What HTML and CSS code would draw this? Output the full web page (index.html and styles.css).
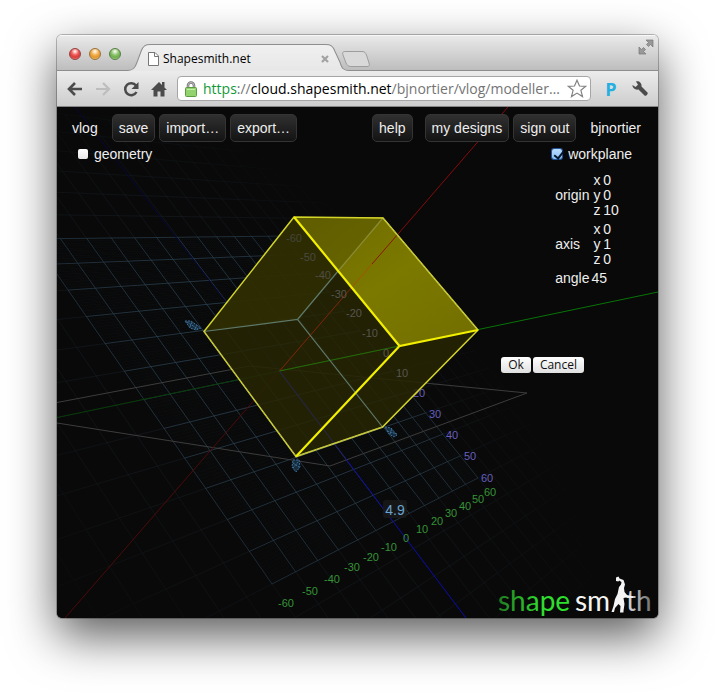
FILE: index.html
```html
<!DOCTYPE html>
<html lang="en">
<head>
<meta charset="utf-8">
<title>Shapesmith.net</title>
<link rel="stylesheet" href="styles.css">
</head>
<body>
<div class="window">
  <header class="tabstrip">
    <div class="lights"><span class="light red"></span><span class="light amber"></span><span class="light green"></span></div>
    <div class="tab">
      <svg class="tab-shape" viewBox="0 0 219 27" preserveAspectRatio="none" aria-hidden="true">
        <defs><linearGradient id="tabfill" x1="0" y1="0" x2="0" y2="1"><stop offset="0" stop-color="#f0f0f0"/><stop offset="1" stop-color="#e7e7e7"/></linearGradient></defs>
        <path d="M0 26.500 C6 26.500 8 24 10 18 L14 7 C16 2 18 .5 23 .5 H196 C201 .5 203 2 205 7 L210 18 C212 24 213 26.500 219 26.500 V27 H0Z" fill="url(#tabfill)"/>
        <path d="M0 26.500 C6 26.500 8 24 10 18 L14 7 C16 2 18 .5 23 .5 H196 C201 .5 203 2 205 7 L210 18 C212 24 213 26.500 219 26.500" fill="none" stroke="#8e8e8e"/>
      </svg>
      <div class="tab-content">
        <svg width="11" height="14" viewBox="0 0 11 14" aria-hidden="true"><path d="M.5.5H7L10.500 4V13.500H.5Z" fill="#fff" stroke="#777"/><path d="M6.500.5V4.500H10.500" fill="none" stroke="#777"/></svg>
        <span class="tab-title">Shapesmith.net</span>
        <svg width="8" height="8" viewBox="0 0 8 8" aria-hidden="true"><path d="M1 1 7 7M7 1 1 7" stroke="#a2a2a2" stroke-width="2.200"/></svg>
      </div>
    </div>
    <svg class="new-tab" width="28" height="16" viewBox="0 0 28 16" aria-hidden="true"><path d="M4 .5H20C23 .5 23.500 2 24.500 4L27 12C28 15 27 15.500 25 15.500H9C6 15.500 5 14 4 12L1 4C0 1 1 .5 4 .5Z" fill="#d9d9d9" stroke="#9d9d9d"/></svg>
    <svg class="expand" width="16" height="16" viewBox="0 0 16 16" aria-hidden="true"><path d="M8 1H15V8L12.500 5.500 10.500 7.500 8.500 5.500 10.500 3.500ZM1 8 3.500 10.500 5.500 8.500 7.500 10.500 5.500 12.500 8 15H1Z" fill="#999" stroke="#777" stroke-width=".7"/></svg>
  </header>
  <nav class="toolbar">
    <svg class="nav-icon" width="16" height="16" viewBox="0 0 16 16" aria-hidden="true"><path d="M15 8H3M8 2 2 8 8 14" fill="none" stroke="#4b4b4b" stroke-width="2.600"/></svg>
    <svg class="nav-icon" width="16" height="16" viewBox="0 0 16 16" aria-hidden="true"><path d="M1 8H13M8 2 14 8 8 14" fill="none" stroke="#bdbdbd" stroke-width="2.200"/></svg>
    <svg class="nav-icon" width="16" height="16" viewBox="0 0 16 16" aria-hidden="true"><path d="M13 4.500A6 6 0 1 0 13.500 11" fill="none" stroke="#4b4b4b" stroke-width="2.500"/><path d="M15.500 1V8H8.500Z" fill="#4b4b4b"/></svg>
    <svg class="nav-icon" width="16" height="16" viewBox="0 0 16 16" aria-hidden="true"><path d="M8 1 11 4V1H13.500V6.500L16 9H13.500V15.500H9.500V10.500H6.500V15.500H2.500V9H0Z" fill="#4b4b4b"/></svg>
    <div class="address">
      <svg width="12" height="16" viewBox="0 0 12 16" aria-hidden="true"><path d="M3 8V4.500A3 3 0 0 1 9 4.500V8" fill="none" stroke="#777" stroke-width="2.600"/><path d="M3 8V4.500A3 3 0 0 1 9 4.500V8" fill="none" stroke="#ccc" stroke-width=".8"/><rect x=".5" y="6.500" width="11" height="9" rx="1" fill="#92d36e" stroke="#5d9b42"/><path d="M2 8.500H10" stroke="#c5efad"/></svg>
      <span class="url"><span class="scheme">https</span><span class="dim">://</span><span class="host">cloud.shapesmith.net</span><span class="dim">/bjnortier/vlog/modeller…</span></span>
      <svg width="20" height="19" viewBox="0 0 20 19" aria-hidden="true"><path d="M10 1.200 12.500 7 18.800 7.300 13.900 11.300 15.500 17.600 10 14.100 4.500 17.600 6.100 11.300 1.200 7.300 7.500 7Z" fill="#fff" stroke="#828282" stroke-width="1.200"/></svg>
    </div>
    <span class="extension">P</span>
    <svg class="wrench" width="18" height="18" viewBox="0 0 18 18" aria-hidden="true"><path d="M5 1.500C8 .8 11 3 10.500 6.500L16.500 12.500C17.500 14 15 16.500 13.500 15.500L7.500 9.500C4.500 10.300 1.200 8 1.500 5L4.500 7 7 4.800Z" fill="#4b4b4b"/></svg>
  </nav>
  <main class="viewport">
    <svg class="scene" viewBox="57 107 601 511" preserveAspectRatio="xMidYMid slice" role="img" aria-label="3D workplane">
      <defs>
        <linearGradient id="topface" x1="0" y1="0" x2="1" y2="1"><stop offset="0" stop-color="#6c6900"/><stop offset=".5" stop-color="#7c7900"/><stop offset="1" stop-color="#716e00"/></linearGradient>
        <linearGradient id="shapefill"><stop offset="0" stop-color="#207c20"/><stop offset=".6" stop-color="#30dc30"/><stop offset="1" stop-color="#2be02b"/></linearGradient>
        <linearGradient id="thfill"><stop offset="0" stop-color="#e0e0e0"/><stop offset="1" stop-color="#6e6e6e"/></linearGradient>
      </defs>
      <rect x="57" y="107" width="601" height="511" fill="#090909"/>
      <g id="grid" fill="none" stroke="#37556b"></g>
      <path d="M57 423 330 466 527 393 250 366 57 402.500" fill="none" stroke="#3d3d3d"/>
      <path d="M75 107 279.500 371" stroke="#08083c"/><path d="M279.500 371 466 618" stroke="#0b0ba6"/>
      <path d="M65 618 279.500 371" stroke="#4d0b0b"/><path d="M279.500 371 508 107" stroke="#870b0b"/>
      <path d="M57 417.500 279.500 371" stroke="#073c07"/><path d="M279.500 371 658 292" stroke="#087408"/>

      <g fill="#675fbd" class="ticks">
        <text x="419" y="397">20</text><text x="435" y="418">30</text><text x="452" y="439">40</text><text x="470" y="460">50</text><text x="487" y="482">60</text>
      </g>
      <path d="M294 217 204 331.500 296 456.500 382.500 427 478 330 399.500 346Z" fill="#272504" fill-opacity=".86"/>
      <path d="M294 217 204 331.500 297.500 319.500 339 270Z" fill="#3a3800" fill-opacity=".45"/>
      <path d="M294 217H383L478 330 399.500 346Z" fill="url(#topface)"/>
      <path d="M294 217H383L339 270Z" fill="#4d4b00" fill-opacity=".4"/>
      <path d="M279.500 371 352 287" stroke="#7c2508"/><path d="M352 287 372 264" stroke="#a55208"/><path d="M372 264 398 234" stroke="#8c1800"/>
      <path d="M279.500 371 399 346" stroke="#236b08"/>
      <path d="M279.500 371 346 459" stroke="#25254c"/>
      <g fill="#58554f" class="ticks">
        <text x="294" y="242" fill="#47453a">-60</text><text x="308" y="261" fill="#4b4940">-50</text><text x="323" y="279" fill="#504d44">-40</text><text x="339" y="298">-30</text><text x="354" y="317">-20</text><text x="370" y="337">-10</text><text x="386" y="357">0</text><text x="402" y="377">10</text>
      </g>
      <g fill="none" stroke="#5f7969" stroke-width="1.200">
        <path d="M204 331.500 297.500 319.500 382.500 427M297.500 319.500 339 270"/><path d="M339 270 383 218" stroke="#898c35"/>
      </g>
      <g fill="none" stroke="#d4d529" stroke-width="1.500">
        <path d="M294 217 204 331.500 296 456.500 382.500 427 478 330 383 218Z"/>
        <path d="M204 331.500 296 456.500 382.500 427M478 330 383 218" stroke="#a8ad75" stroke-dasharray="2 2" stroke-width="1"/>
      </g>
      <path d="M294 217 399.500 346 478 330M399.500 346 296 456.500" fill="none" stroke="#f2f000" stroke-width="2.200"/>
      <g fill="#172c3d" stroke="#3c6f99" stroke-dasharray="2 1">
        <path d="M185 321 191 321 201 328 196 330 190 328Z"/><path d="M187 322 198 329M190 327 192 322M195 329 197 325"/>
        <path d="M385 427 391 428 397 435 394 437 389 434Z"/><path d="M387 431 397 434M390 434 392 428"/>
        <path d="M293 460 299 460 300 467 296 472 292 467Z"/><path d="M293 463 299 467M293 468 298 462"/>
      </g>
      <g fill="#369336" class="ticks">
        <text x="286" y="607">-60</text><text x="310" y="595">-50</text><text x="332" y="583">-40</text><text x="352" y="571">-30</text><text x="371" y="561">-20</text><text x="389" y="551">-10</text><text x="406" y="542">0</text><text x="422" y="533">10</text><text x="437" y="525">20</text><text x="451" y="517">30</text><text x="465" y="510">40</text><text x="478" y="503">50</text><text x="490" y="496">60</text>
      </g>
      <rect x="383" y="500" width="24" height="18" rx="3" fill="#191919" fill-opacity=".85"/>
      <text x="395" y="514.500" class="readout">4.9</text>
      <g class="logo">
        <text x="498" y="611" fill="url(#shapefill)">shape</text><text x="575" y="611" fill="#f4f4f4">sm</text><text x="626" y="611" fill="url(#thfill)">th</text>
        <path d="M616 577.500 618.500 576.500 619.500 578.500 623.500 580 625 584.500 624 588 624.500 592 627 595 633 596.500 633 598 626 597.500 623.500 598 624.500 604 623.500 611 623.500 612.500 620 612.500 620.500 606 618.500 604 615 608 614 612 611.500 612 613.500 606 615 599 617.500 594 619 587 621 584.500 621.500 582 619 580.500 618.500 581.500 616 581Z" fill="#f4f4f4"/>
      </g>
    </svg>
    <div class="overlay">
      <div class="actions">
        <span class="design">vlog</span>
        <button>save</button><button>import…</button><button>export…</button>
        <button class="help">help</button>
        <button class="designs">my designs</button><button>sign out</button>
        <span class="user">bjnortier</span>
      </div>
      <div class="panels">
        <label class="toggle"><input type="checkbox">geometry</label>
        <section class="workplane">
          <label class="toggle"><input type="checkbox" checked>workplane</label>
          <table class="props">
            <tr><th scope="row">origin</th><td><div>x&thinsp;0</div><div>y&thinsp;0</div><div>z&thinsp;10</div></td></tr>
            <tr><th scope="row">axis</th><td><div>x&thinsp;0</div><div>y&thinsp;1</div><div>z&thinsp;0</div></td></tr>
            <tr><th scope="row">angle</th><td>45</td></tr>
          </table>
        </section>
      </div>
      <div class="confirm"><button>Ok</button><button>Cancel</button></div>
    </div>
  </main>
</div>
<script src="grid.js"></script>
</body>
</html>
```
FILE: styles.css
```css
* { box-sizing: border-box; }
body {
  margin: 0;
  padding: 35px 57px 79px;
  background: #fff;
  font-family: "Liberation Sans", Arial, sans-serif;
  font-size: 14px;
}
.window {
  border-radius: 5px;
  overflow: hidden;
  box-shadow: 0 0 0 1px rgba(0, 0, 0, .25), 0 18px 48px rgba(0, 0, 0, .65);
}
.tabstrip {
  display: flex;
  align-items: flex-end;
  height: 36px;
  padding: 0 4px 0 12px;
  background: linear-gradient(#e9e9e9, #bcbcbc);
  border-top: 1px solid #f8f8f8;
  box-shadow: inset 0 -1px #8e8e8e;
}
.lights { display: flex; gap: 8px; align-self: center; }
.light {
  width: 12px;
  height: 12px;
  border-radius: 50%;
  border: 1px solid #7c4a46;
}
.red { background: radial-gradient(circle at 50% 25%, #fff, #ee5a57 40%, #d93c3a 65%, #ff9b96); border-color: #96403d; }
.amber { background: radial-gradient(circle at 50% 25%, #fff, #f3b04d 40%, #e0962f 65%, #ffe28a); border-color: #99703a; }
.green { background: radial-gradient(circle at 50% 25%, #fff, #8dc56c 40%, #6dab4d 65%, #c8f3a0); border-color: #567d47; }
.tab { display: grid; width: 222px; height: 27px; margin-left: 6px; }
.tab-shape, .tab-content { grid-area: 1 / 1; }
.tab-shape { width: 100%; height: 27px; }
.tab-content {
  z-index: 1;
  display: flex;
  align-items: center;
  gap: 4px;
  padding: 2px 20px 0 21px;
}
.tab-title { flex: 1; font-family: "Open Sans", sans-serif; font-size: 12px; color: #000; }
.new-tab { margin: 0 0 4px -7px; }
.expand { align-self: flex-start; margin: 3px 0 0 auto; }
.toolbar {
  display: flex;
  align-items: center;
  gap: 12px;
  height: 36px;
  padding: 0 9px 0 10px;
  background: linear-gradient(#ececec, #cdcdcd);
  border-bottom: 1px solid #858585;
}
.nav-icon { flex: none; }
.address {
  flex: 1;
  min-width: 0;
  display: flex;
  align-items: center;
  gap: 3px;
  height: 25px;
  margin-left: -2px;
  padding: 0 3px 0 7px;
  background: #fff;
  border: 1px solid #a6a6a6;
  border-radius: 4px;
}
.address svg { flex: none; }
.url { flex: 1; padding-left: 3px; white-space: nowrap; font-family: "Open Sans", sans-serif; font-size: 14px; color: #000; }
.scheme { color: #109a38; }
.dim { color: #747474; }
.extension { width: 16px; text-align: center; color: #25afe0; font: bold 18px "Open Sans", sans-serif; }
.viewport { display: grid; color: #eee; background: #090909; }
.scene, .overlay { grid-area: 1 / 1; }
.scene { display: block; width: 100%; }
.ticks { font-size: 11px; text-anchor: middle; }
.readout { font-size: 14px; text-anchor: middle; fill: #67a3d3; }
.logo { font-family: Lato, sans-serif; font-size: 28px; }
.overlay { z-index: 1; }
.actions { display: flex; align-items: center; gap: 4px; padding: 7px 17px 0 15px; line-height: 16px; }
.actions button {
  height: 28px;
  padding: 0 5px;
  border: 1px solid #343434;
  border-radius: 5px;
  background: linear-gradient(#303030, #131313);
  color: #eee;
  font: inherit;
}
.actions button { padding: 0 6px; }
.design { margin-right: 10px; }
.actions .help { margin-left: auto; }
.actions .designs { margin-left: 8px; }
.user { margin-left: 10px; }
.panels { display: flex; justify-content: space-between; padding: 4px 26px 0 21px; line-height: 16px; }
.toggle { display: flex; align-items: center; gap: 6px; height: 16px; }
.toggle input {
  appearance: none;
  width: 10px;
  height: 10px;
  margin: 0;
  border-radius: 2px;
  background: linear-gradient(#fff, #e8e8e8);
}
.toggle input:checked {
  background: linear-gradient(#b9dcff, #8ac2f5);
  box-shadow: 0 0 0 1px #22549b;
}
.toggle input:checked::before {
  content: "";
  display: block;
  width: 4px;
  height: 8px;
  margin-left: 4px;
  border: solid #06182f;
  border-width: 0 2px 2px 0;
  transform: rotate(38deg);
}
.props { margin: 11px 0 0 3px; border-spacing: 0; line-height: 15px; }
.props th { padding: 0 2px 4px 0; text-align: left; font-weight: normal; }
.props td { padding: 0 0 4px; }
.props td div { padding-left: 2px; }
.confirm { display: flex; gap: 2px; justify-content: flex-end; margin: 67px 74px 0 0; }
.confirm button {
  height: 16px;
  padding: 0 7px;
  border: 0;
  border-radius: 3px;
  background: linear-gradient(#fff, #e0e0e0);
  color: #111;
  font: 12px/16px "Open Sans", sans-serif;
}
```
FILE: grid.js
```js
// Perspective projection of workplane coordinates to scene coordinates.
function project(g, b) {
  const u = (g + 60) / 120, v = b / 60;
  const w = 1 + 0.3949 * u - 0.0693 * v;
  return [(144 + 380.5 * u + 109.15 * v) / w, (399.5 + 90.1 * u + 144 * v) / w];
}

const grid = document.getElementById("grid");

function line(a, b, opacity) {
  const el = document.createElementNS("http://www.w3.org/2000/svg", "path");
  el.setAttribute("d", "M" + a.map(n => n.toFixed(1)) + "L" + b.map(n => n.toFixed(1)));
  el.setAttribute("stroke-opacity", opacity.toFixed(3));
  grid.appendChild(el);
}

function strength(g, b) {
  const edge = Math.max(Math.abs(g), Math.abs(b));
  const fade = Math.max(0, 1 - Math.hypot(g, b) / 150);
  return edge <= 60 ? 0.25 + 0.4 * fade : 0.3 * fade;
}

// Unit lines inside the working area.
for (let i = -60; i <= 60; i += 1) {
  line(project(i, -60), project(i, 60), 0.05);
  line(project(-60, i), project(60, i), 0.05);
}

// Ten-unit lines fade out with distance from the origin.
for (let i = -130; i <= 130; i += 10) {
  for (let j = -130; j < 130; j += 10) {
    const s = strength(i, j + 5);
    if (s > 0) {
      line(project(i, j), project(i, j + 10), s);
      line(project(j, i), project(j + 10, i), s);
    }
  }
}
```
